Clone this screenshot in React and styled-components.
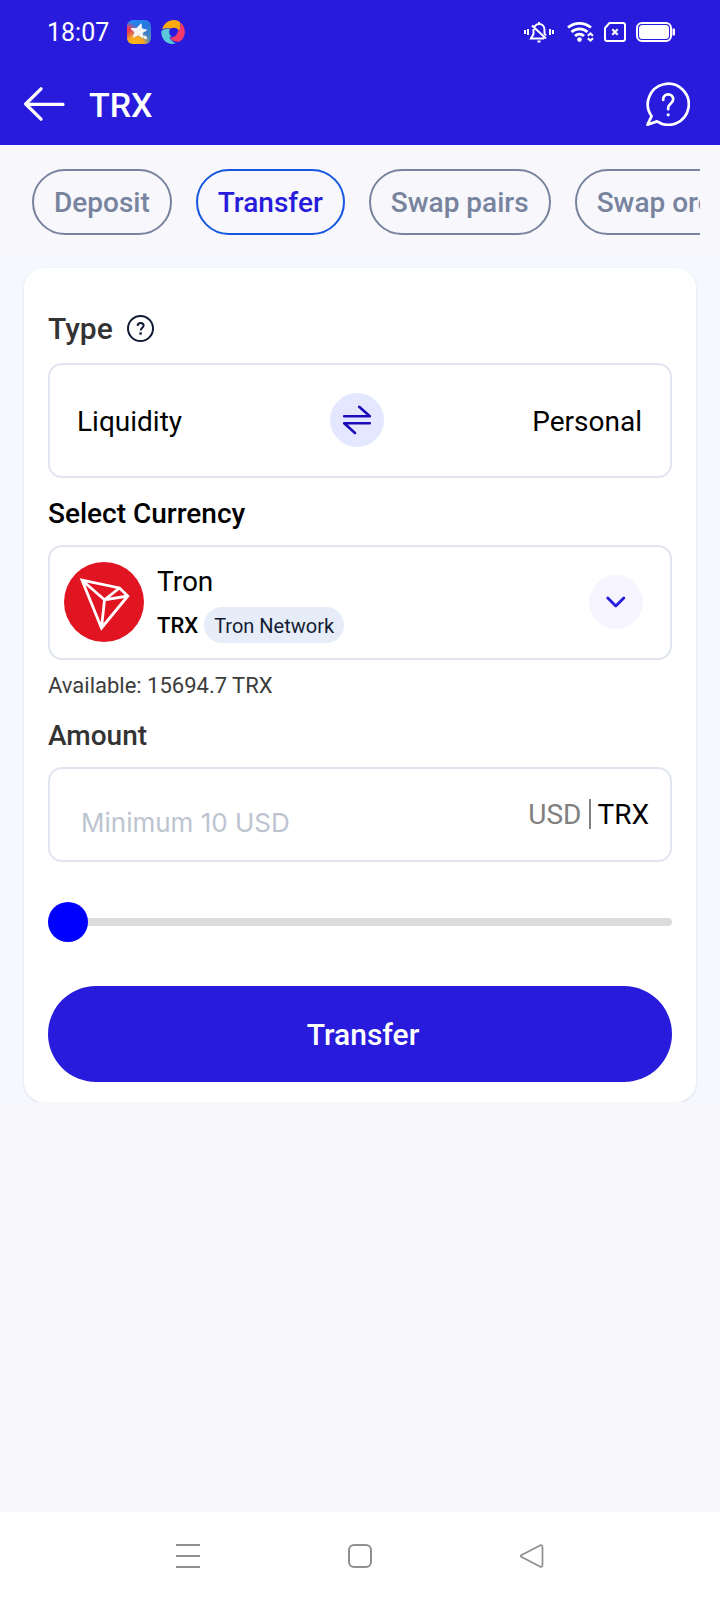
import React, { useState } from "react";
import styled, { createGlobalStyle } from "styled-components";

const brand = "#281bdc";
const line = "#e1e5f0";

const GlobalStyle = createGlobalStyle`
  *, *::before, *::after { box-sizing: border-box; }
  body { margin: 0; background: #f7f7fc; }
  body, button, input { font-family: Roboto, "Liberation Sans", sans-serif; }
  button { margin: 0; padding: 0; border: 0; background: none; color: inherit; cursor: pointer; }
  svg { display: block; flex: none; }
`;

const Page = styled.div`
  min-height: 100vh;
  display: flex;
  flex-direction: column;
`;

const Header = styled.header`
  background: ${brand};
  color: #fff;
`;

const StatusBar = styled.div`
  display: flex;
  align-items: center;
  justify-content: space-between;
  height: 64px;
  padding: 0 45px 0 47px;
`;

const StatusGroup = styled.div`
  display: flex;
  align-items: center;
  gap: 10px;
`;

const Clock = styled.time`
  padding-top: 2px;
  font-size: 25px;
  line-height: 30px;
  margin-right: 8px;
`;

const TitleBar = styled.div`
  display: flex;
  align-items: center;
  gap: 24px;
  height: 81px;
  padding: 0 30px 2px 24px;
`;

const Title = styled.h1`
  flex: 1;
  margin: 0;
  padding-top: 2px;
  font-size: 34px;
  line-height: 40px;
  font-weight: 500;
`;

const Tabs = styled.nav`
  display: flex;
  gap: 24px;
  margin-right: 20px;
  padding: 24px 0 24px 32px;
  overflow: hidden;
`;

const Tab = styled.button`
  flex: none;
  height: 66px;
  padding: 2px 20px 0;
  border: 2px solid ${(p) => (p.$active ? "#1657e0" : "#78849e")};
  border-radius: 33px;
  color: ${(p) => (p.$active ? brand : "#78849e")};
  font-size: 28px;
  line-height: 34px;
  font-weight: 500;
  white-space: nowrap;
`;

const Band = styled.main`
  padding: 9px 24px 0;
  background: #f5f8ff;
  overflow: hidden;
`;

const Card = styled.form`
  display: flex;
  flex-direction: column;
  padding: 44px 24px 20px;
  border-radius: 20px;
  background: #fff;
  box-shadow: 0 1px 3px rgba(40, 50, 80, 0.12);
`;

const LabelRow = styled.div`
  display: flex;
  align-items: center;
  gap: 14px;
  margin-bottom: ${(p) => (p.$large ? 17 : 14)}px;
`;

const Label = styled.label`
  color: ${(p) => (p.$strong ? "#000" : "#333")};
  font-size: ${(p) => (p.$large ? 30 : 28)}px;
  line-height: 34px;
  font-weight: 500;
`;

const Field = styled.div`
  display: flex;
  align-items: center;
  width: 100%;
  height: ${(p) => (p.$short ? 95 : 115)}px;
  margin-bottom: ${(p) => p.$after}px;
  border: 2px solid ${line};
  border-radius: 14px;
  background: #fff;
`;

const DirectionField = styled(Field)`
  justify-content: space-between;
  padding: 0 28px 2px 27px;
`;

const Side = styled.span`
  padding-top: 4px;
  font-size: 28px;
  line-height: 34px;
  color: #000;
`;

const RoundButton = styled.button`
  display: grid;
  place-items: center;
  width: 54px;
  height: 54px;
  border-radius: 50%;
  background: #e3e7ff;
`;

const CurrencyField = styled(Field)`
  gap: 13px;
  padding: 0 27px 2px 14px;
  text-align: left;
  color: #000;
`;

const CurrencyInfo = styled.span`
  flex: 1;
  display: flex;
  flex-direction: column;
  gap: 8px;
  padding-top: 4px;
`;

const CurrencyName = styled.span`
  font-size: 28px;
  line-height: 34px;
`;

const CurrencyMeta = styled.span`
  display: flex;
  align-items: center;
  gap: 6px;
`;

const Symbol = styled.span`
  padding-top: 2px;
  font-size: 22px;
  line-height: 34px;
  font-weight: 500;
`;

const NetworkBadge = styled.span`
  padding: 2px 10px 0;
  border-radius: 18px;
  background: #e6edf8;
  color: #141c33;
  font-size: 20px;
  line-height: 34px;
  font-weight: 400;
`;

const ChevronDisc = styled.span`
  display: grid;
  place-items: center;
  width: 54px;
  height: 54px;
  border-radius: 50%;
  background: #f5f4ff;
`;

const Available = styled.p`
  margin: 0 0 19px;
  color: #3c3c3c;
  font-size: 22px;
  line-height: 28px;
`;

const AmountField = styled(Field)`
  padding: 0 21px 2px 0;
`;

const AmountInput = styled.input`
  flex: 1;
  min-width: 0;
  height: 89px;
  padding: 17px 0 0 31px;
  border: 0;
  outline: 0;
  background: transparent;
  color: #000;
  font-family: Inter, Roboto, sans-serif;
  font-size: 26px;
  &::placeholder { color: #bcc4d0; opacity: 1; }
`;

const Unit = styled.button`
  padding-top: 2px;
  font-size: 28px;
  line-height: 28px;
  color: ${(p) => (p.$active ? "#000" : "#808080")};
  & + & {
    margin-left: 8px;
    padding-left: 6px;
    border-left: 2px solid #808080;
  }
`;

const Slider = styled.input`
  appearance: none;
  width: 100%;
  height: 40px;
  margin: 0 0 44px;
  background: transparent;
  &::-webkit-slider-runnable-track {
    height: 8px;
    border-radius: 4px;
    background: #dcdcdc;
  }
  &::-webkit-slider-thumb {
    appearance: none;
    width: 40px;
    height: 40px;
    margin-top: -16px;
    border-radius: 50%;
    background: #00f;
  }
`;

const Submit = styled.button`
  width: 100%;
  height: 96px;
  padding: 2px 0 0 6px;
  border-radius: 48px;
  background: ${brand};
  color: #fff;
  font-size: 30px;
  line-height: 36px;
  font-weight: 500;
`;

const SystemNav = styled.nav`
  display: flex;
  align-items: center;
  justify-content: center;
  gap: 148px;
  height: 88px;
  margin-top: auto;
  background: #fff;
`;

const StarAppIcon = () => (
  <svg width="24" height="24" viewBox="0 0 24 24" aria-hidden="true">
    <defs>
      <linearGradient id="starBase" x1="0" y1="0" x2="1" y2="1">
        <stop offset="0" stopColor="#1f8cf5" />
        <stop offset="0.55" stopColor="#2a76e0" />
        <stop offset="1" stopColor="#5b98a0" />
      </linearGradient>
      <radialGradient id="starRed" cx="0" cy="0.55" r="0.5">
        <stop offset="0" stopColor="#f03a3a" />
        <stop offset="0.5" stopColor="#e2455e" />
        <stop offset="1" stopColor="#c04a90" stopOpacity="0" />
      </radialGradient>
      <radialGradient id="starYellow" cx="0.35" cy="1.05" r="0.65">
        <stop offset="0" stopColor="#ffbe10" />
        <stop offset="0.55" stopColor="#f8a423" />
        <stop offset="1" stopColor="#c9a060" stopOpacity="0" />
      </radialGradient>
    </defs>
    <rect width="24" height="24" rx="6" fill="url(#starBase)" />
    <rect width="24" height="24" rx="6" fill="url(#starRed)" />
    <rect width="24" height="24" rx="6" fill="url(#starYellow)" />
    <path d="M14 3.800l.6 4.900 5 1.400-4.400 2.700.2 4.900-4-2.900-5.300 2.400 1.900-5-3.900-3.500 5.600-.4z" fill="#f5f5f7" stroke="#f5f5f7" strokeLinejoin="round" />
    <path d="M15.800 15.200l3.600 1 .8 3-3.400-.8z" fill="#f5f5f7" />
  </svg>
);

const SwirlAppIcon = () => (
  <svg width="24" height="24" viewBox="0 0 24 24" aria-hidden="true">
    <path d="M1.200 9.500C2.600 3.600 7.500 0 13 0c2.400 0 4.500.8 6 2.300.9 2.700.6 5.800-.9 8.700C16.500 7.800 13 6.700 9.500 8.600 6.500 7.800 3.500 8 1.200 9.500z" fill="#ffab0f" />
    <path d="M19.900 2.600c3.500 3.600 4.700 8.200 3.500 12.400-.8 3-2.600 5.300-4.800 6.400-3.600.9-7.400-.4-9.800-3.600 4.600-.2 7.400-2.600 7.900-6.200 2.300-2 3.400-5.400 3.200-9z" fill="#f23a6d" />
    <path d="M.3 11.300c2-2.200 5.200-3.200 8.700-2.300-1.700 3-.6 6 1.600 7.500-.7.400-1.500.6-2.300.7 1.400 2.800 3.500 4.800 6.500 6-4.300 1.800-9.300.2-12.200-3.700C1.100 17.100.1 14.300.3 11.300z" fill="#5ac8d8" />
  </svg>
);

const MutedBellIcon = () => (
  <svg width="34" height="22" viewBox="0 0 34 22" fill="none" stroke="#fff" strokeWidth="2" aria-hidden="true">
    <path d="M2 9v4M5 8v6M27 8v6M30 9v4" />
    <path d="M11.500 5.500C12.800 3.700 14 3 16 3c3.500 0 5.500 2.600 5.500 6v3.500l1.500 2M10.500 8v5L8 17.500h13M9 4.500l14 13" />
    <path d="M16 1v2M14.500 20.500h3" />
  </svg>
);

const WifiIcon = () => (
  <svg width="27" height="22" viewBox="0 0 27 22" fill="none" stroke="#fff" strokeWidth="2.800" aria-hidden="true">
    <path d="M1 6.500C8 1 17 1 24 6.500M4.500 11c4.500-4.200 11.500-4.200 16 0M8 15c2.700-2.500 6.300-2.500 9 0" />
    <circle cx="12.500" cy="18.600" r="2.300" fill="#fff" stroke="none" />
    <path d="M20.800 14.800l2.600-2.400 2.600 2.400M20.800 17.200l2.600 2.400 2.600-2.400" strokeWidth="2" />
  </svg>
);

const SimIcon = () => (
  <svg width="22" height="20" viewBox="0 0 22 20" fill="none" stroke="#fff" strokeWidth="2" aria-hidden="true">
    <path d="M5.500 1H19a2 2 0 0 1 2 2v14a2 2 0 0 1-2 2H3a2 2 0 0 1-2-2V6z" strokeLinejoin="round" />
    <path d="M8.300 7.300l5.400 5.400M13.700 7.300l-5.400 5.400" strokeWidth="2.200" />
  </svg>
);

const BatteryIcon = () => (
  <svg width="39" height="20" viewBox="0 0 39 20" aria-hidden="true">
    <rect x="1" y="1" width="34" height="18" rx="5" fill="none" stroke="#fff" strokeWidth="2" />
    <rect x="3" y="3" width="30" height="14" rx="3.500" fill="#fff" />
    <path d="M36.500 6.500H38q1 0 1 1v5q0 1-1 1h-1.500z" fill="#fff" />
  </svg>
);

const BackIcon = () => (
  <svg width="41" height="34" viewBox="0 0 41 34" fill="none" stroke="#fff" strokeWidth="3.200" strokeLinecap="round" strokeLinejoin="round" aria-hidden="true">
    <path d="M17 1.800L1.700 17l15.300 15.200M2 17.400h37" />
  </svg>
);

const HelpBubbleIcon = () => (
  <svg width="44" height="44" viewBox="0 0 44 44" fill="none" stroke="#fff" strokeWidth="2.700" strokeLinejoin="round" aria-hidden="true">
    <path d="M5.600 34.200A20.500 20.500 0 1 1 11 39.400L1.500 42.700z" />
    <path d="M17.200 18v-.7a5 5 0 0 1 10 0c0 4.200-5 4.500-5 8.200v1.700" strokeLinecap="round" />
    <circle cx="22.200" cy="32.800" r="1.600" fill="#fff" stroke="none" />
  </svg>
);

const TypeHelpIcon = () => (
  <svg width="28" height="28" viewBox="0 0 28 28" fill="none" stroke="#101a33" strokeWidth="2" aria-hidden="true">
    <circle cx="13.500" cy="13.500" r="12.500" />
    <path d="M10.600 10.800c.2-1.900 1.200-2.800 3-2.800s3 1 3 2.600c0 2.300-3 2.500-3 5" strokeWidth="2" />
    <path d="M13.600 17.300v2.400" strokeWidth="2.400" />
  </svg>
);

const SwapIcon = () => (
  <svg width="30" height="30" viewBox="0 0 30 30" fill="none" stroke="#1c0cb8" strokeWidth="2.600" strokeLinecap="round" strokeLinejoin="round" aria-hidden="true">
    <path d="M2.200 11.200h25.600L17.200 1.800M27.800 18.200H2.200l10.800 9.800" />
  </svg>
);

const ChevronIcon = () => (
  <svg width="20" height="12" viewBox="0 0 20 12" fill="none" stroke={brand} strokeWidth="2.800" strokeLinecap="round" strokeLinejoin="round" aria-hidden="true">
    <path d="M1.800 2l8 8 8-8" />
  </svg>
);

const TronLogo = () => (
  <svg width="80" height="80" viewBox="0 0 80 80" aria-hidden="true">
    <circle cx="40" cy="40" r="40" fill="#e11422" />
    <path d="M18 18.200L55.500 26l8.300 8L37.500 66zM18 18.200l22.500 19.600L37.500 66M40.500 37.800L55.500 26M40.500 37.800L63.800 34" fill="none" stroke="#fff" strokeWidth="2.800" strokeLinejoin="miter" />
  </svg>
);

const RecentsIcon = () => (
  <svg width="24" height="24" viewBox="0 0 24 24" stroke="#8f8f8f" strokeWidth="2" aria-hidden="true">
    <path d="M0 1h24M0 12h24M0 23h24" />
  </svg>
);

const HomeIcon = () => (
  <svg width="24" height="24" viewBox="0 0 24 24" fill="none" stroke="#8f8f8f" strokeWidth="2" aria-hidden="true">
    <rect x="1" y="1" width="22" height="22" rx="5" />
  </svg>
);

const BackTriangleIcon = () => (
  <svg width="24" height="24" viewBox="0 0 24 24" fill="none" stroke="#8f8f8f" strokeWidth="1.700" strokeLinejoin="round" aria-hidden="true">
    <path d="M1.600 11Q0 12 1.600 13L20 22.600Q22.500 23.500 22.500 21V3Q22.500.5 20 1.400z" />
  </svg>
);

const tabs = ["Deposit", "Transfer", "Swap pairs", "Swap orders"];

export default function App() {
  const [tab, setTab] = useState("Transfer");
  const [unit, setUnit] = useState("TRX");
  const [swapped, setSwapped] = useState(false);
  const [amount, setAmount] = useState("");
  const [share, setShare] = useState(0);
  const sides = swapped ? ["Personal", "Liquidity"] : ["Liquidity", "Personal"];

  return (
    <Page>
      <GlobalStyle />
      <Header>
        <StatusBar>
          <StatusGroup>
            <Clock>18:07</Clock>
            <StarAppIcon />
            <SwirlAppIcon />
          </StatusGroup>
          <StatusGroup>
            <MutedBellIcon />
            <WifiIcon />
            <SimIcon />
            <BatteryIcon />
          </StatusGroup>
        </StatusBar>
        <TitleBar>
          <button type="button" aria-label="Back"><BackIcon /></button>
          <Title>TRX</Title>
          <button type="button" aria-label="Help"><HelpBubbleIcon /></button>
        </TitleBar>
      </Header>

      <Tabs aria-label="Sections">
        {tabs.map((name) => (
          <Tab key={name} type="button" $active={name === tab} onClick={() => setTab(name)}>
            {name}
          </Tab>
        ))}
      </Tabs>

      <Band>
        <Card onSubmit={(e) => e.preventDefault()}>
          <LabelRow $large>
            <Label $large htmlFor="direction">Type</Label>
            <button type="button" aria-label="About transfer types"><TypeHelpIcon /></button>
          </LabelRow>
          <DirectionField $after={19}>
            <Side>{sides[0]}</Side>
            <RoundButton id="direction" type="button" aria-label="Swap direction" onClick={() => setSwapped(!swapped)}>
              <SwapIcon />
            </RoundButton>
            <Side>{sides[1]}</Side>
          </DirectionField>

          <LabelRow>
            <Label $strong htmlFor="currency">Select Currency</Label>
          </LabelRow>
          <CurrencyField as="button" id="currency" type="button" aria-haspopup="listbox" $after={12}>
            <TronLogo />
            <CurrencyInfo>
              <CurrencyName>Tron</CurrencyName>
              <CurrencyMeta>
                <Symbol>TRX</Symbol>
                <NetworkBadge>Tron Network</NetworkBadge>
              </CurrencyMeta>
            </CurrencyInfo>
            <ChevronDisc><ChevronIcon /></ChevronDisc>
          </CurrencyField>
          <Available>Available: 15694.7 TRX</Available>

          <LabelRow>
            <Label htmlFor="amount">Amount</Label>
          </LabelRow>
          <AmountField $short $after={40}>
            <AmountInput
              id="amount"
              inputMode="decimal"
              placeholder="Minimum 10 USD"
              value={amount}
              onChange={(e) => setAmount(e.target.value)}
            />
            {["USD", "TRX"].map((name) => (
              <Unit key={name} type="button" $active={name === unit} onClick={() => setUnit(name)}>
                {name}
              </Unit>
            ))}
          </AmountField>
          <Slider
            type="range"
            min="0"
            max="100"
            aria-label="Share of balance"
            value={share}
            onChange={(e) => setShare(Number(e.target.value))}
          />
          <Submit type="submit">Transfer</Submit>
        </Card>
      </Band>

      <SystemNav aria-label="System">
        <button type="button" aria-label="Recent apps"><RecentsIcon /></button>
        <button type="button" aria-label="Home"><HomeIcon /></button>
        <button type="button" aria-label="Go back"><BackTriangleIcon /></button>
      </SystemNav>
    </Page>
  );
}
